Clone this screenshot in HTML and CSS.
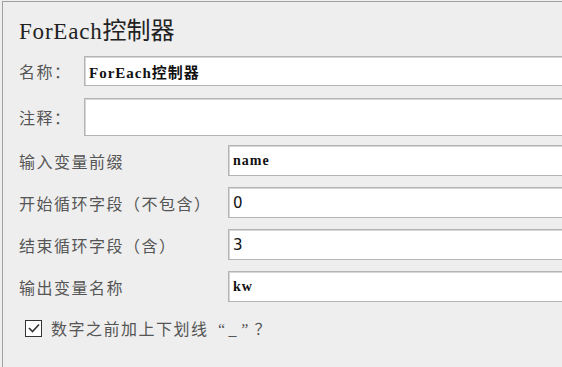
FILE: index.html
```html
<!DOCTYPE html>
<html lang="zh-CN">
<head>
  <meta charset="UTF-8" />
  <meta name="viewport" content="width=device-width, initial-scale=1.0" />
  <title>ForEach控制器</title>
  <link rel="stylesheet" href="styles.css">
</head>
<body>
  <div class="panel">
    <h1 class="title"><span class="latin">ForEach</span>控制器</h1>

    <div class="head-fields">
      <label for="name">名称：</label>
      <input type="text" id="name" class="field field-name" value="ForEach控制器" />

      <label for="comment">注释：</label>
      <input type="text" id="comment" class="field field-comment" value="" />
    </div>

    <div class="loop-fields">
      <label for="prefix">输入变量前缀</label>
      <input type="text" id="prefix" class="field serif" value="name" />

      <label for="startIdx">开始循环字段（不包含）</label>
      <input type="text" id="startIdx" class="field sans" value="0" />

      <label for="endIdx">结束循环字段（含）</label>
      <input type="text" id="endIdx" class="field sans" value="3" />

      <label for="output">输出变量名称</label>
      <input type="text" id="output" class="field serif" value="kw" />
    </div>

    <label class="check-row">
      <span class="check-box">
        <svg width="12" height="10" viewBox="0 0 12 10">
          <path d="M1 5 L4.5 8.5 L11 1.5" fill="none" stroke="#333" stroke-width="1.6" />
        </svg>
      </span>
      <span>数字之前加上下划线 <span class="quote">“_”</span>？</span>
    </label>
  </div>
</body>
</html>
```

FILE: styles.css
```css
html, body {
  height: 100%;
}

body {
  margin: 0;
  background: #eeeeee;
  overflow: hidden;
  font-family: "Noto Sans CJK SC", sans-serif;
  color: #555;
}

.panel {
  box-sizing: border-box;
  margin: 1px 0 0 2px;
  height: calc(100% - 1px);
  border-top: 1px solid #a0a0a0;
  border-left: 1px solid #a0a0a0;
  padding: 13px 0 0 16px;
}

.title {
  margin: 0 0 10px 0;
  font-size: 24px;
  line-height: 28px;
  font-weight: normal;
  color: #222;
  font-family: "Noto Sans CJK SC", sans-serif;
}

.title .latin {
  font-family: "Liberation Serif", serif;
  font-size: 23px;
  letter-spacing: 0.8px;
}

label {
  font-size: 16px;
  letter-spacing: 1.5px;
}

.head-fields {
  display: grid;
  grid-template-columns: 65px 1fr;
  grid-template-rows: 30px 38px;
  row-gap: 12px;
  align-items: center;
}

.loop-fields {
  display: grid;
  grid-template-columns: 209px 1fr;
  grid-auto-rows: 31px;
  row-gap: 11px;
  align-items: center;
  margin-top: 9px;
}

.field {
  box-sizing: border-box;
  height: 100%;
  width: 100%;
  margin: 0;
  padding: 0 4px;
  border: 1px solid #b4b4b4;
  border-right: none;
  box-shadow: inset 1px 1px 0 #d6d6d6;
  background: white;
  color: #111;
  font-size: 14px;
  outline: none;
}

.field-name {
  font-family: "Liberation Serif", "Noto Sans CJK SC", serif;
  font-weight: bold;
  font-size: 15px;
  letter-spacing: 1px;
}

.serif {
  font-family: "Liberation Serif", serif;
  font-weight: bold;
  font-size: 14px;
  letter-spacing: 1px;
}

.sans {
  font-family: "DejaVu Sans", sans-serif;
  font-size: 15px;
}

.check-row {
  display: flex;
  align-items: center;
  gap: 9px;
  margin: 14px 0 0 6px;
  font-size: 16px;
}

.check-box {
  box-sizing: border-box;
  width: 17px;
  height: 17px;
  border: 1px solid #333;
  background: white;
  display: flex;
  align-items: center;
  justify-content: center;
}

.quote {
  font-family: "Liberation Serif", serif;
  font-style: italic;
  letter-spacing: 3px;
  margin: 0 3px;
}
```
